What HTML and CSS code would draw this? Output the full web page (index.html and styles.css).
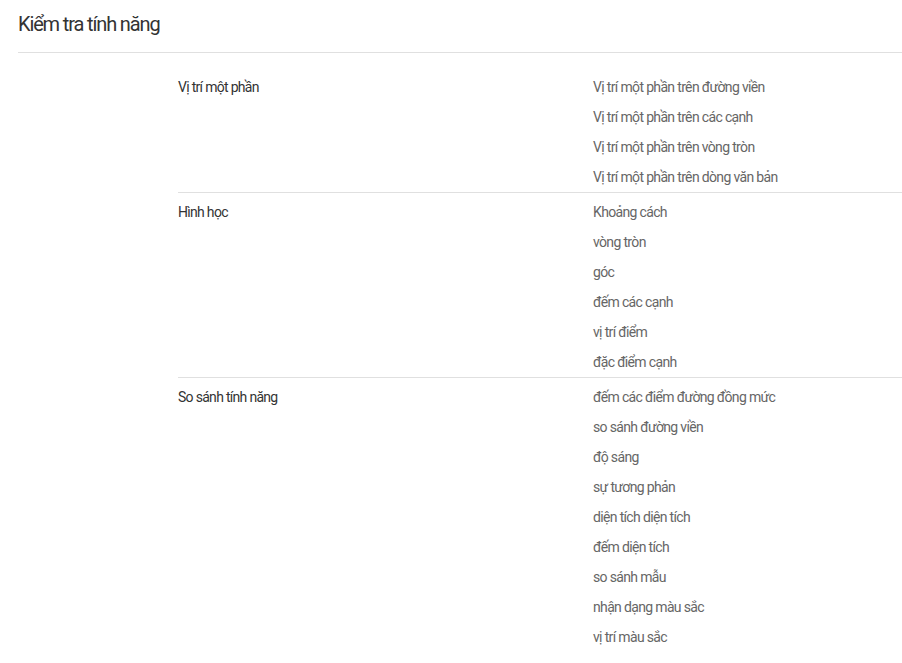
FILE: index.html
```html
<!DOCTYPE html>
<html lang="vi">
<head>
    <meta charset="UTF-8">
    <meta name="viewport" content="width=device-width, initial-scale=1.0">
    <title>Kiểm tra tính năng</title>
    <link rel="stylesheet" href="styles.css">
</head>
<body>
    <div class="page">
        <h1 class="page-title">Kiểm tra tính năng</h1>
        <div class="feature-list">
            <div class="feature-group">
                <div class="group-name">Vị trí một phần</div>
                <ul class="group-items">
                    <li>Vị trí một phần trên đường viền</li>
                    <li>Vị trí một phần trên các cạnh</li>
                    <li>Vị trí một phần trên vòng tròn</li>
                    <li>Vị trí một phần trên dòng văn bản</li>
                </ul>
            </div>
            <div class="feature-group">
                <div class="group-name">Hình học</div>
                <ul class="group-items">
                    <li>Khoảng cách</li>
                    <li>vòng tròn</li>
                    <li>góc</li>
                    <li>đếm các cạnh</li>
                    <li>vị trí điểm</li>
                    <li>đặc điểm cạnh</li>
                </ul>
            </div>
            <div class="feature-group">
                <div class="group-name">So sánh tính năng</div>
                <ul class="group-items">
                    <li>đếm các điểm đường đồng mức</li>
                    <li>so sánh đường viền</li>
                    <li>độ sáng</li>
                    <li>sự tương phản</li>
                    <li>diện tích diện tích</li>
                    <li>đếm diện tích</li>
                    <li>so sánh mẫu</li>
                    <li>nhận dạng màu sắc</li>
                    <li>vị trí màu sắc</li>
                </ul>
            </div>
        </div>
    </div>
</body>
</html>
```
FILE: styles.css
```css
body {
    font-family: Roboto, "Noto Sans", Arial, sans-serif;
    background-color: #fff;
    color: #333;
    margin: 0;
    padding: 0;
}
.page {
    padding-left: 18px;
}
.page-title {
    font-size: 20px;
    font-weight: normal;
    letter-spacing: -0.057em;
    color: #333;
    margin: 0;
    padding: 11px 0 14px;
    line-height: 27px;
    border-bottom: 1px solid #e0e0e0;
}
.feature-list {
    margin: 15px 0 0 160px;
}
.feature-group {
    display: flex;
    padding-top: 4px;
    border-top: 1px solid #e0e0e0;
}
.feature-group:first-child {
    border-top: none;
}
.group-name {
    width: 415px;
    font-size: 14px;
    line-height: 30px;
    letter-spacing: -0.05em;
    color: #333;
}
.group-items {
    list-style: none;
    margin: 0;
    padding: 0;
}
.group-items li {
    font-size: 14px;
    line-height: 30px;
    letter-spacing: -0.047em;
    color: #666;
}
```
